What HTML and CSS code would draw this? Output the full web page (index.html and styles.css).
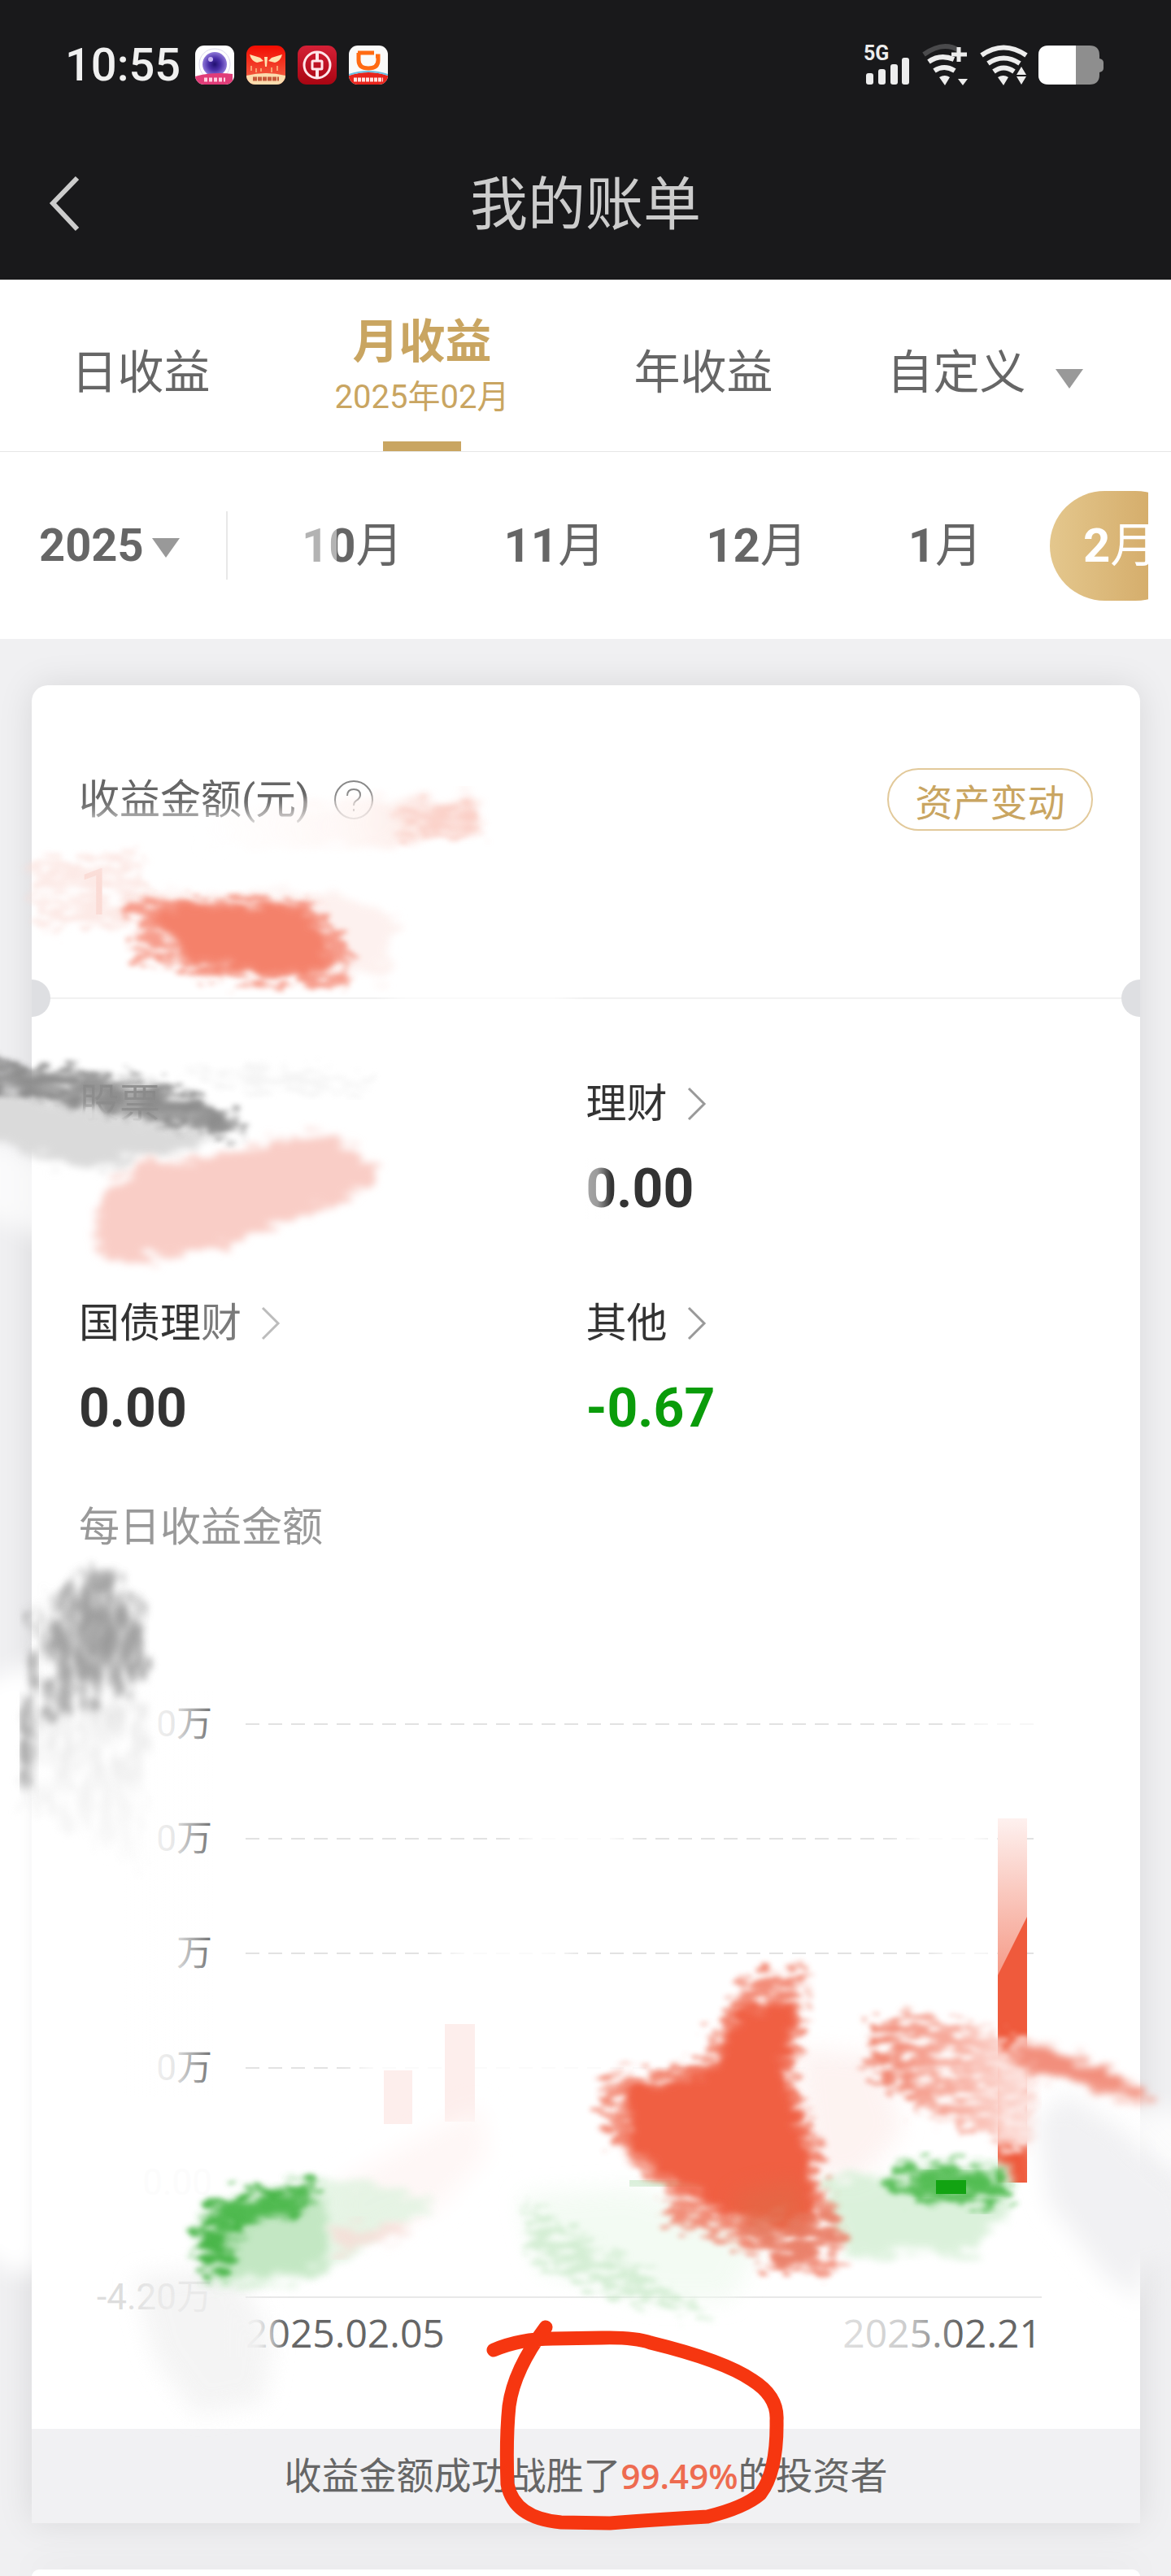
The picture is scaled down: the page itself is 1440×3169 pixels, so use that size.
FILE: index.html
```html
<!DOCTYPE html>
<html lang="zh-CN">
<head>
    <meta charset="utf-8">
    <title>我的账单</title>
    <meta name="viewport" content="width=device-width" />
    <link rel="stylesheet" href="styles.css">
</head>
<body>
<div class="page">

<div class="status-bar">
    <span class="time">10:55</span>
    <div class="apps">
        <svg viewBox="0 0 48 48">
            <defs>
                <clipPath id="app"><rect width="48" height="48" rx="11"/></clipPath>
                <radialGradient id="lens"><stop offset="0" stop-color="#201070"/><stop offset=".5" stop-color="#4a2fa8"/><stop offset="1" stop-color="#8f78d8"/></radialGradient>
                <linearGradient id="hot" x2="0" y2="1"><stop offset="0" stop-color="#f40b00"/><stop offset="1" stop-color="#f06a4c"/></linearGradient>
                <linearGradient id="bank" x2="0" y2="1"><stop offset="0" stop-color="#d42036"/><stop offset="1" stop-color="#a90512"/></linearGradient>
            </defs>
            <g clip-path="url(#app)">
                <rect width="48" height="48" fill="#fff"/>
                <circle cx="24" cy="23" r="19" fill="none" stroke="#d9d5ec"/>
                <circle cx="24" cy="23" r="15" fill="url(#lens)"/>
                <circle cx="19" cy="17" r="3" fill="#c6b4f2"/>
                <path d="M0 38q22-6 46-3v13H0z" fill="#e03c78"/>
                <path d="M11 42h26" stroke="#ffd0e0" stroke-width="5" stroke-dasharray="4 2"/>
            </g>
        </svg>
        <svg viewBox="0 0 48 48">
            <g clip-path="url(#app)">
                <rect width="48" height="48" fill="url(#hot)"/>
                <path d="M4 11l13 4 4 4-8 2q-7-2-9-10zM44 11l-13 4-4 4 8 2q7-2 9-10zM22 14h4l-1 12h-2z" fill="#ffe2b0"/>
                <path d="M6 31v-6M12 33v-5M18 32v-4M31 33v-6M38 31v-6" stroke="#f9a070" stroke-width="2"/>
                <path d="M0 37q24-6 48 0v11H0z" fill="#fbdcae"/>
                <path d="M8 41h32" stroke="#c75a3c" stroke-width="5" stroke-dasharray="5 1"/>
            </g>
        </svg>
        <svg viewBox="0 0 48 48">
            <rect width="48" height="48" rx="11" fill="url(#bank)"/>
            <g fill="none" stroke="#ffe6ea" stroke-width="3">
                <circle cx="24" cy="24" r="16"/>
                <rect x="18" y="19" width="12" height="10" rx="1"/>
                <path d="M24 8v11M24 29v11" stroke-width="4"/>
            </g>
        </svg>
        <svg viewBox="0 0 48 48">
            <g clip-path="url(#app)">
                <rect width="48" height="48" fill="#fafafa"/>
                <path d="M11 9h20M12 9v9q0 10 12 10t12-10v-5h-3" fill="none" stroke="#ff6a13" stroke-width="5"/>
                <path d="M0 37q24-8 48 0v11H0z" fill="#e8241c"/>
                <path d="M0 36q24-8 48 0" fill="none" stroke="#69bfe2" stroke-width="2"/>
                <path d="M6 42h36" stroke="#ffe3e0" stroke-width="5" stroke-dasharray="4 1"/>
            </g>
        </svg>
    </div>
    <svg class="signals" viewBox="0 0 300 50">
        <text x="0" y="19">5G</text>
        <g fill="#ededed">
            <rect x="3" y="35" width="9" height="14" rx="3"/>
            <rect x="18" y="30" width="9" height="19" rx="3"/>
            <rect x="33" y="24" width="9" height="25" rx="3"/>
            <rect x="47" y="16" width="9" height="33" rx="3"/>
            <path d="M93 40q7-4 13 0l-6 10zM165 40q7-4 13 0l-6 10zM116 42h12l-6 8zM188 39h12l-6 10zM188 37h12l-6-10z"/>
        </g>
        <g fill="none" stroke="#ededed" stroke-width="6">
            <path d="M74 12q24-17 43-5" stroke="#4a4a4c"/>
            <path d="M80 21q14-10 31-3M87 32q12-8 25 0M145 13q27-19 55 0M153 23q19-13 39 0M160 33q12-9 25 0"/>
            <path d="M108 12h19M117 3v18" stroke-width="5"/>
        </g>
        <path d="M228 1h50q12 0 12 12v4q5 1 5 5v7q0 4-5 5v3q0 12-12 12h-50q-13 0-13-12V13q0-12 13-12z" fill="#8e8e8e"/>
        <path d="M228 1h33v48h-33q-13 0-13-12V13q0-12 13-12z" fill="#fff"/>
    </svg>
</div>

<header class="nav">
    <button class="back" type="button" aria-label="返回">
        <svg viewBox="0 0 40 70"><path d="M35 2L5 33l30 32"/></svg>
    </button>
    <h1>我的账单</h1>
</header>

<nav class="tabs">
    <a class="tab" href="#day">日收益</a>
    <a class="tab active" href="#month">月收益<small>2025年02月</small></a>
    <a class="tab" href="#year">年收益</a>
    <a class="tab" href="#custom">自定义<i class="caret"></i></a>
</nav>

<div class="months">
    <button class="year" type="button">2025<i class="caret"></i></button>
    <div class="month-list">
        <a href="#m10"><b>10</b>月</a>
        <a href="#m11"><b>11</b>月</a>
        <a href="#m12"><b>12</b>月</a>
        <a href="#m1"><b>1</b>月</a>
        <a class="active" href="#m2"><b>2</b>月</a>
    </div>
</div>

<main>
    <section class="card">
        <div class="summary">
            <div class="summary-head">
                <h2>收益金额(元)</h2>
                <svg class="help" viewBox="0 0 50 50"><circle cx="25" cy="25" r="23"/><path d="M17 20q0-8 8-8t8 7q0 4-5 7-3 2-3 6M25 36v3"/></svg>
                <button class="change" type="button">资产变动</button>
            </div>
            <p class="amount">1</p>
        </div>

        <div class="holdings">
            <div>
                <a class="muted" href="#stock">股票</a>
            </div>
            <div>
                <a href="#wealth">理财<svg viewBox="0 0 24 42"><path d="M2 2l19 19L2 40"/></svg></a>
                <p>0.00</p>
            </div>
            <div>
                <a href="#bond">国债理财<svg viewBox="0 0 24 42"><path d="M2 2l19 19L2 40"/></svg></a>
                <p>0.00</p>
            </div>
            <div>
                <a href="#other">其他<svg viewBox="0 0 24 42"><path d="M2 2l19 19L2 40"/></svg></a>
                <p class="down">-0.67</p>
            </div>
        </div>

        <div class="chart">
            <h3>每日收益金额</h3>
            <div class="axis">
                <div class="line"><span>0万</span></div>
                <div class="line"><span>0万</span></div>
                <div class="line"><span>万</span></div>
                <div class="line"><span>0万</span></div>
                <div class="line zero"><span>0.00</span></div>
                <div class="line base"><span>-4.20万</span></div>
            </div>
            <div class="dates"><span>2025.02.05</span><span>2025.02.21</span></div>
        </div>

        <p class="rank">收益金额成功战胜了<b>99.49%</b>的投资者</p>
    </section>
    <section class="card next"></section>
</main>

<!-- brush marks and the red pen ring, drawn over the bill -->
<svg class="marks" viewBox="0 0 1440 3169" aria-hidden="true">
    <defs>
        <filter id="soft" x="-30%" y="-30%" width="160%" height="160%"><feGaussianBlur stdDeviation="14"/></filter>
        <filter id="brush" x="-20%" y="-20%" width="140%" height="140%">
            <feTurbulence type="fractalNoise" baseFrequency=".03 .11" numOctaves="4" seed="4" result="n"/>
            <feDisplacementMap in="SourceGraphic" in2="n" scale="44" xChannelSelector="R" yChannelSelector="G"/>
            <feGaussianBlur stdDeviation="5"/>
        </filter>
        <filter id="dry" x="-20%" y="-20%" width="140%" height="140%">
            <feTurbulence type="fractalNoise" baseFrequency=".04 .12" numOctaves="4" seed="9" result="n"/>
            <feDisplacementMap in="SourceGraphic" in2="n" scale="50" xChannelSelector="R" yChannelSelector="G" result="d"/>
            <feColorMatrix in="n" values="0 0 0 0 0  0 0 0 0 0  0 0 0 0 0  0 0 4 0 -1.2" result="holes"/>
            <feComposite in="d" in2="holes" operator="in"/>
            <feGaussianBlur stdDeviation="3"/>
        </filter>
        <filter id="dry-up" x="-20%" y="-20%" width="140%" height="140%">
            <feTurbulence type="fractalNoise" baseFrequency=".08 .03" numOctaves="4" seed="6" result="n"/>
            <feDisplacementMap in="SourceGraphic" in2="n" scale="44" xChannelSelector="R" yChannelSelector="G" result="d"/>
            <feColorMatrix in="n" values="0 0 0 0 0  0 0 0 0 0  0 0 0 0 0  0 0 3 0 -.9" result="holes"/>
            <feComposite in="d" in2="holes" operator="in"/>
            <feGaussianBlur stdDeviation="4"/>
        </filter>
        <linearGradient id="wipe"><stop offset="0" stop-color="#fff"/><stop offset=".55" stop-color="#fff" stop-opacity=".85"/><stop offset="1" stop-color="#fff" stop-opacity="0"/></linearGradient>
        <linearGradient id="streak"><stop offset="0" stop-color="#fef8f6" stop-opacity="0"/><stop offset=".6" stop-color="#fef2ef"/><stop offset="1" stop-color="#fac9bf"/></linearGradient>
        <linearGradient id="bar" x2="0" y2="1"><stop offset="0" stop-color="#fef1ef"/><stop offset="1" stop-color="#f59a87"/></linearGradient>
        <linearGradient id="stroke"><stop offset="0" stop-color="#f0806a"/><stop offset=".55" stop-color="#f8b3a6"/><stop offset="1" stop-color="#fde5e1"/></linearGradient>
        <linearGradient id="finger" x2="0" y2="1"><stop offset="0" stop-color="#b5b5b5"/><stop offset=".5" stop-color="#e4e4e4"/><stop offset="1" stop-color="#fafafa"/></linearGradient>
    </defs>

    <!-- wiped areas -->
    <g fill="#fff" filter="url(#soft)">
        <path d="M95 1006L480 1008V1060H95z"/>
        <path d="M-60 1395L70 1425V1530L-60 1480z" opacity=".7"/>
        <path d="M-60 2090L48 2040V2790L20 2800L-60 2740z"/>
        <path d="M210 1372h200v60H130z"/>
        <path d="M480 1215h220v26H480z"/>
    </g>
    <path d="M150 2080H265V2580H150z" fill="url(#wipe)"/>
    <path d="M275 2830H350V2900H275z" fill="url(#wipe)"/>
    <path d="M1030 2840H1180V2900H1030z" fill="url(#wipe)" opacity=".8"/>
    <path d="M714 1425H752V1500H714z" fill="url(#wipe)" opacity=".6"/>
    <path d="M245 1600H360V1655H245z" fill="#fff" opacity=".35"/>
    <g fill="#fff" filter="url(#soft)">
        <path d="M640 2240h130v40H640zM550 2390h150v90H550zM440 2525h800v40H440zM1110 2240h110v40h-110zM1150 2385h80v30h-80zM1190 2105h110v30h-110z"/>
    </g>

    <!-- amount -->
    <path d="M250 1005L430 985L580 980L592 1022L500 1038L240 1045z" fill="url(#streak)" opacity=".7" filter="url(#brush)"/>
    <path d="M480 1000L580 985L590 1025L500 1034z" fill="#fac9bf" opacity=".7" filter="url(#dry)"/>
    <path d="M32 1060L170 1048L190 1142L50 1145z" fill="#fbdcd6" opacity=".6" filter="url(#dry)"/>
    <path d="M160 1100L420 1100L490 1130L470 1205L200 1185z" fill="#fdeeeb" opacity=".8" filter="url(#brush)"/>
    <path d="M152 1108L385 1106L415 1140L435 1180L430 1212L350 1214L240 1200L165 1180z" fill="#f4806a" opacity=".75" filter="url(#dry)"/>
    <path d="M178 1116L370 1112L398 1148L412 1190L350 1202L235 1186z" fill="#f4816b" filter="url(#brush)"/>

    <!-- stock row -->
    <path d="M220 1320L330 1306L460 1330L450 1345L300 1345z" fill="#efefef" opacity=".6" filter="url(#dry)"/>
    <path d="M-20 1340L120 1362L280 1400L190 1426L90 1436L-20 1402z" fill="#dadada" filter="url(#brush)"/>
    <path d="M-20 1302L70 1312L200 1332L250 1352L310 1388L285 1404L200 1381L100 1360L-20 1344z" fill="#858585" opacity=".9" filter="url(#dry)"/>
    <path d="M-20 1312L80 1328L180 1340L250 1362L295 1392L190 1374L80 1354L-20 1336z" fill="#8c8c8c" opacity=".8" filter="url(#brush)"/>
    <path d="M130 1465L170 1434L260 1420L395 1394L435 1408L466 1436L450 1462L380 1492L270 1534L160 1552L128 1548L116 1495z" fill="#f9cdc6" filter="url(#brush)"/>

    <!-- finger mark -->
    <path d="M40 1980L80 1945L160 1940L180 2030L178 2300L120 2270L24 2220z" fill="url(#finger)" opacity=".7" filter="url(#dry-up)"/>
    <path d="M62 1970L100 1925L145 1930L175 1970L176 2070L120 2100L60 2125z" fill="#999" opacity=".8" filter="url(#dry-up)"/>
    <path d="M92 1990L160 1980L160 2040L80 2060z" fill="#969696" opacity=".7" filter="url(#soft)"/>
    <path d="M44 1995L38 2090L28 2200" fill="none" stroke="#a8a8a8" stroke-width="18" filter="url(#dry-up)"/>
    <path d="M165 2800L290 2790L335 2880L325 2955L240 2970L190 2900z" fill="#f0f0f0" opacity=".7" filter="url(#soft)"/>

    <!-- daily bars -->
    <path d="M472 2547h35v66h-35zM547 2490h37v120h-37z" fill="#fdeeec"/>
    <path d="M774 2682h120v8H774z" fill="#d6edd6"/>
    <path d="M1227 2237h36v195h-36z" fill="url(#bar)"/>
    <path d="M1263 2358V2685H1227V2430z" fill="#ef5a3c"/>

    <path d="M410 2690L590 2590L600 2650L540 2715L420 2765z" fill="#fef7f6" filter="url(#soft)"/>
    <path d="M245 2715L400 2678L540 2705L420 2785L360 2810L255 2810z" fill="#e0f3e0" opacity=".8" filter="url(#brush)"/>
    <path d="M250 2740L400 2700L405 2790L260 2808z" fill="#c3e7c3" filter="url(#brush)"/>
    <path d="M250 2714L300 2692L390 2680L382 2718L300 2736L290 2766L280 2808L246 2800L238 2746z" fill="#48b648" filter="url(#dry)"/>
    <path d="M270 2720L382 2692L374 2712L290 2732L262 2760z" fill="#4fba4f" filter="url(#brush)"/>
    <path d="M410 2742L520 2734L480 2756L420 2772z" fill="#f7dcd6" opacity=".8" filter="url(#brush)"/>

    <path d="M640 2700L780 2690L940 2750L900 2830L800 2830L660 2790z" fill="#f1faf1" opacity=".8" filter="url(#soft)"/>
    <path d="M645 2710L720 2750L880 2850L760 2830L650 2780z" fill="#bfe5bf" opacity=".6" filter="url(#dry)"/>
    <path d="M980 2520L1080 2530L1110 2620L1060 2680L1000 2680z" fill="#fdf0ee" opacity=".8" filter="url(#soft)"/>
    <path d="M1010 2680L1235 2660L1245 2715L1200 2770L1040 2775z" fill="#d8f0d8" opacity=".9" filter="url(#brush)"/>
    <path d="M1095 2662L1180 2656L1240 2672L1242 2712L1150 2712L1090 2698z" fill="#3fb53f" opacity=".85" filter="url(#dry)"/>
    <path d="M1115 2674L1225 2674L1230 2698L1125 2696z" fill="#53bd53" filter="url(#brush)"/>
    <path d="M1151 2682h37v17h-37z" fill="#12a312"/>

    <path d="M742 2555L860 2535L880 2490L915 2435L990 2410L998 2455L980 2505L978 2565L1005 2625L1015 2700L1040 2730L1034 2790L960 2800L900 2760L825 2742L815 2695L760 2650L738 2600z" fill="#f06f56" opacity=".8" filter="url(#dry)"/>
    <path d="M772 2570L870 2550L900 2485L950 2455L976 2475L966 2565L992 2645L1004 2730L960 2750L880 2715L820 2680L772 2640z" fill="#f05f42" filter="url(#brush)"/>
    <path d="M910 2730L1030 2720L1024 2782L960 2790z" fill="#e77f68" opacity=".75" filter="url(#dry)"/>
    <path d="M900 2700L985 2680L990 2740L920 2745z" fill="#d8704a" opacity=".4" filter="url(#soft)"/>

    <path d="M1215 2528L1270 2520L1270 2640L1225 2630z" fill="#fdeae7" filter="url(#brush)"/>
    <path d="M1068 2485L1150 2480L1275 2512L1262 2650L1130 2600L1068 2545z" fill="url(#stroke)" filter="url(#dry)"/>
    <path d="M1255 2516L1330 2532L1415 2574L1410 2590L1320 2562L1250 2540z" fill="#f28e7b" filter="url(#brush)"/>
    <path d="M1280 2565L1360 2585L1470 2600V2690L1400 2660z" fill="#fff" opacity=".8" filter="url(#soft)"/>
    <path d="M1275 2610L1310 2575L1380 2620L1450 2690L1470 2770L1404 2790L1404 2830L1360 2800L1290 2710z" fill="#f1f1f3" filter="url(#soft)"/>

    <path class="ring" d="M607 2891Q640 2877 680 2877L740 2876Q780 2875 800 2882Q890 2904 925 2928Q957 2948 955 2978Q956 3040 935 3068Q915 3085 870 3096Q800 3100 750 3104L690 3103Q632 3098 624 3056Q622 3000 626 2960Q632 2915 671 2863"/>
</svg>

</div>
</body>
</html>
```
FILE: styles.css
```css
body {
    margin: 0;
    font-family: Roboto, "Noto Sans CJK SC", sans-serif;
    color: #666;
    background: #f0f0f2;
}

h1, h2, h3, p {
    margin: 0;
    font-weight: 400;
}

a {
    color: inherit;
    text-decoration: none;
}

button {
    padding: 0;
    border: 0;
    background: none;
    color: inherit;
    font: inherit;
}

.page {
    position: relative;
    overflow: hidden;
}

/* top */
.status-bar {
    display: flex;
    align-items: center;
    height: 160px;
    padding: 0 78px 0 80px;
    background: #19191b;
}

.time {
    color: #f0f0f0;
    font-size: 56px;
    font-weight: 500;
}

.apps {
    display: flex;
    gap: 15px;
    margin-left: 18px;
}

.apps svg {
    width: 48px;
    height: 48px;
}

.signals {
    width: 300px;
    height: 50px;
    margin-left: auto;
    overflow: visible;
}

.signals text {
    fill: #ededed;
    font-size: 25px;
    font-weight: 700;
}

.nav {
    position: relative;
    display: flex;
    align-items: center;
    justify-content: center;
    height: 184px;
    background: #19191b;
    color: #ccc;
}

.nav h1 {
    font-size: 71px;
    line-height: 100px;
}

.back {
    position: absolute;
    left: 60px;
    width: 40px;
    height: 70px;
}

.back svg {
    display: block;
    fill: none;
    stroke: #ccc;
    stroke-width: 6;
}

/* tabs */
.tabs {
    display: flex;
    height: 211px;
    padding-right: 56px;
    border-bottom: 1px solid #e6e6e6;
    background: #fff;
}

.tab {
    position: relative;
    flex: 1;
    padding-top: 79px;
    text-align: center;
    font-size: 57px;
    line-height: 72px;
}

.tab.active {
    padding-top: 41px;
    color: #c9a561;
    font-weight: 700;
}

.tab.active::after {
    content: "";
    position: absolute;
    bottom: 0;
    left: 50%;
    width: 96px;
    height: 12px;
    margin-left: -48px;
    background: #c9a561;
}

.tab small {
    display: block;
    font-size: 40px;
    font-weight: 400;
    line-height: 64px;
}

.caret {
    display: inline-block;
    border: 17px solid transparent;
    border-top: 24px solid #999;
    border-bottom: 0;
}

.tab .caret {
    margin-left: 36px;
}

.months {
    display: flex;
    align-items: center;
    height: 230px;
    padding: 0 28px 0 48px;
    background: #fff;
    font-size: 58px;
    line-height: 80px;
}

.year {
    display: flex;
    align-items: center;
    width: 232px;
    height: 84px;
    border-right: 2px solid #e8e8e8;
    font-size: 56px;
    font-weight: 700;
}

.year .caret {
    margin: 6px 0 0 10px;
}

.month-list {
    position: relative;
    display: flex;
    flex: 1;
    gap: 42px;
    padding-left: 50px;
    overflow: hidden;
}

.month-list::before {
    content: "";
    position: absolute;
    left: 90px;
    width: 44px;
    height: 135px;
    background: rgba(255, 255, 255, .5);
}

.month-list a {
    flex: none;
    padding: 0 41px;
    line-height: 135px;
}

.month-list .active {
    border-radius: 68px;
    background: linear-gradient(90deg, #e4c78d, #cfa35e);
    color: #fff;
}

/* card */
main {
    padding: 57px 38px 0 39px;
}

.card {
    border-radius: 20px 20px 0 0;
    background: #fff;
    box-shadow: 0 0 44px rgba(0, 0, 0, .1);
}

.next {
    height: 9px;
    margin-top: 57px;
}

.summary {
    position: relative;
    height: 282px;
    padding: 102px 58px 0;
    border-bottom: 2px solid #f1f1f1;
}

.summary::before,
.summary::after {
    content: "";
    position: absolute;
    bottom: -24px;
    left: 0;
    width: 23px;
    height: 46px;
    border-radius: 0 23px 23px 0;
    background: #dedfe2;
}

.summary::after {
    right: 0;
    left: auto;
    border-radius: 23px 0 0 23px;
}

.summary-head {
    display: flex;
    align-items: center;
    height: 77px;
}

.summary-head h2 {
    font-size: 50px;
    line-height: 60px;
}

.help {
    width: 50px;
    height: 50px;
    margin-left: 28px;
    fill: none;
    stroke: #888;
    stroke-width: 2;
}

.change {
    box-sizing: border-box;
    width: 253px;
    height: 77px;
    margin-left: auto;
    border: 2px solid #e2c99a;
    border-radius: 39px;
    color: #c9a561;
    font-size: 46px;
}

.amount {
    margin-top: 26px;
    color: #fbdcd6;
    font-size: 80px;
    line-height: 100px;
}

.holdings {
    display: grid;
    grid-template-columns: 1fr 1fr;
    row-gap: 95px;
    padding: 99px 58px 0;
    color: #333;
}

.holdings a {
    display: flex;
    align-items: center;
    font-size: 50px;
    line-height: 60px;
}

.holdings .muted {
    color: #999;
}

.holdings svg {
    width: 24px;
    height: 42px;
    margin-left: 24px;
    fill: none;
    stroke: #999;
    stroke-width: 3;
}

.holdings p {
    margin-top: 35px;
    font-size: 66px;
    font-weight: 700;
    line-height: 80px;
}

.holdings .down {
    color: #0a9c0a;
}

/* chart */
.chart {
    padding: 76px 121px 88px 58px;
}

.chart h3 {
    color: #999;
    font-size: 50px;
    line-height: 60px;
}

.axis {
    display: grid;
    gap: 81px;
    margin-top: 182px;
}

.line {
    display: flex;
    align-items: center;
    gap: 41px;
    font-size: 44px;
    line-height: 60px;
}

.line span {
    width: 164px;
    text-align: right;
    white-space: nowrap;
}

.line::after {
    content: "";
    flex: 1;
    height: 2px;
    background: repeating-linear-gradient(90deg, #e2e2e2 0 17px, transparent 17px 28px);
}

.line.zero {
    color: #fcfcfc;
}

.line.zero::after {
    background: none;
}

.line.base {
    color: #ddd;
}

.line.base::after {
    background: #e8e8e8;
}

.dates {
    display: flex;
    justify-content: space-between;
    margin: -16px 0 0 205px;
    font-family: "Open Sans", sans-serif;
    font-size: 48px;
    line-height: 60px;
}

.rank {
    background: #f1f1f3;
    text-align: center;
    font-size: 46px;
    line-height: 116px;
}

.rank b {
    color: #ee6b50;
    font-family: "Open Sans", sans-serif;
    font-size: 42px;
    font-weight: 600;
}

.marks {
    position: absolute;
    top: 0;
    left: 0;
    width: 100%;
    pointer-events: none;
}

.ring {
    fill: none;
    stroke: #f63610;
    stroke-width: 17;
    stroke-linecap: round;
    stroke-linejoin: round;
}
```
